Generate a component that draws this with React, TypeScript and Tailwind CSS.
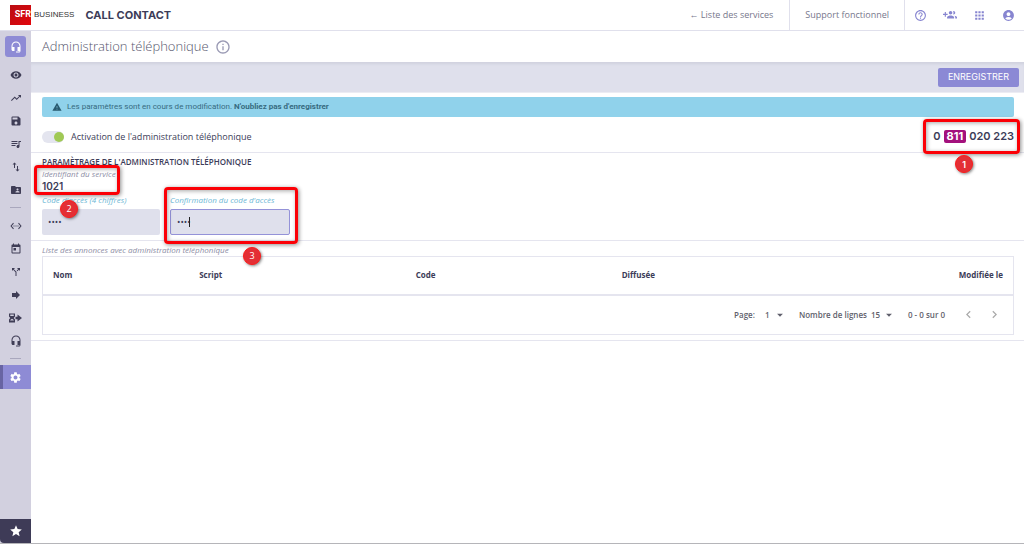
import { useState } from 'react'
import type { IconType } from 'react-icons'
import {
  MdAccountCircle,
  MdApps,
  MdArrowDropDown,
  MdCallSplit,
  MdChevronLeft,
  MdChevronRight,
  MdFolderShared,
  MdForward,
  MdHeadsetMic,
  MdHelpOutline,
  MdImportExport,
  MdInfoOutline,
  MdQueueMusic,
  MdSave,
  MdSettings,
  MdSettingsEthernet,
  MdStar,
  MdToday,
  MdTrendingUp,
  MdVisibility,
  MdWarning,
} from 'react-icons/md'

// hourglass followed by a solid arrow
function OverflowIcon() {
  return (
    <svg width="13" height="12" viewBox="0 0 26 24" fill="currentColor">
      <path
        d="M0 3h12v6l-2.500 3 2.500 3v6H0v-6l2.500-3L0 9zM2.500 5v3h7V5zM6 13.500L2.500 16v1h7v-1z"
        fillRule="evenodd"
      />
      <path d="M13 9.500h4V5l9 7-9 7v-4.500h-4z" />
    </svg>
  )
}

function GroupAddIcon() {
  return (
    <svg width="14" height="14" viewBox="0 0 24 24" fill="currentColor">
      <path d="M8 10H5V7H3v3H0v2h3v3h2v-3h3v-2zm10 1c1.660 0 2.990-1.340 2.990-3S19.660 5 18 5c-.320 0-.630.050-.910.140.570.810.900 1.790.900 2.860s-.340 2.040-.900 2.860c.280.090.590.140.910.140zm-5 0c1.660 0 2.990-1.340 2.990-3S14.660 5 13 5c-1.660 0-3 1.340-3 3s1.340 3 3 3zm6.620 2.160c.830.730 1.380 1.660 1.380 2.840v2h3v-2c0-1.540-2.370-2.490-4.380-2.840zM13 13c-2 0-6 1-6 3v2h12v-2c0-2-4-3-6-3z" />
    </svg>
  )
}

const topItems: { label: string; icon: IconType }[] = [
  { label: 'Supervision', icon: MdVisibility },
  { label: 'Statistiques', icon: MdTrendingUp },
  { label: 'Enregistrements', icon: MdSave },
  { label: 'Annonces', icon: MdQueueMusic },
  { label: 'Import et export', icon: MdImportExport },
  { label: 'Contacts', icon: MdFolderShared },
]

const bottomItems: { label: string; icon: IconType }[] = [
  { label: 'Scripts', icon: MdSettingsEthernet },
  { label: 'Calendriers', icon: MdToday },
  { label: 'Routage', icon: MdCallSplit },
  { label: 'Renvois', icon: MdForward },
  { label: 'Débordement', icon: OverflowIcon },
  { label: 'Agents', icon: MdHeadsetMic },
]

function NavItem({ label, icon: Icon }: { label: string; icon: IconType }) {
  return (
    <a href="#" aria-label={label} className="flex h-[23px] w-full items-center justify-center text-[#3f3d56]">
      <Icon size={12} />
    </a>
  )
}

function Divider() {
  return (
    <div className="flex h-[13px] items-center">
      <div className="h-px w-[11px] bg-[#a9a7bd]" />
    </div>
  )
}

function Sidebar() {
  return (
    <nav className="flex w-[31px] shrink-0 flex-col items-center bg-[#d2d0df] pt-[5px]">
      <a href="#" aria-label="Call Contact" className="mb-[6px] flex size-[21px] items-center justify-center rounded-[3px] bg-[#8e8bd5] text-white">
        <MdHeadsetMic size={12} />
      </a>
      {topItems.map((item) => (
        <NavItem key={item.label} {...item} />
      ))}
      <Divider />
      {bottomItems.map((item) => (
        <NavItem key={item.label} {...item} />
      ))}
      <Divider />
      <a
        href="#"
        aria-label="Paramètres"
        className="flex h-6 w-full items-center justify-center border-l-3 border-[#6864a3] bg-[#8e8bd5] pr-[3px] text-white"
      >
        <MdSettings size={13} />
      </a>
      <a href="#" aria-label="Favoris" className="mt-auto flex h-6 w-full items-center justify-center rounded-bl-sm bg-[#3e3b57] text-white">
        <MdStar size={14} />
      </a>
    </nav>
  )
}

function Frame({ className }: { className: string }) {
  return (
    <div
      className={`pointer-events-none absolute rounded-[4px] border-3 border-[#fb0006] shadow-[1px_1px_4px_rgba(0,0,0,0.45),inset_1px_1px_4px_rgba(0,0,0,0.35)] ${className}`}
    />
  )
}

function Marker({ n, className }: { n: number; className: string }) {
  return (
    <span
      className={`absolute flex size-[18px] items-center justify-center rounded-full border border-[#ff1a1a] bg-[#e32f35] text-[9px] text-white shadow-[1px_1px_3px_rgba(0,0,0,0.5)] ${className}`}
    >
      {n}
    </span>
  )
}

export default function App() {
  const [active, setActive] = useState(true)
  const [code, setCode] = useState('1021')
  const [confirmation, setConfirmation] = useState('1021')

  return (
    <div className="flex min-h-screen flex-col border-b border-[#b5b5b9] bg-white font-['Open_Sans',sans-serif] text-[#3c3c58]">
      <header className="flex h-[31px] items-center border-b border-[#e0e0ec] pl-[10px]">
        <div className="flex items-center text-[#333]">
          <span className="flex h-5 w-[21px] items-center justify-end bg-linear-to-br from-[#b90d12] to-[#e2050b] font-['Roboto',sans-serif] text-[9px] font-bold text-white">
            SFR
          </span>
          <span className="ml-[3px] font-['Liberation_Sans',sans-serif] text-[8px]">BUSINESS</span>
        </div>
        <h1 className="ml-[11px] font-['Inter',sans-serif] text-[11px] font-bold">CALL CONTACT</h1>
        <div className="ml-auto flex h-full items-center text-[9px] text-[#77778c]">
          <a href="#" className="flex h-full items-center border-r border-[#e0e0ec] px-4">← Liste des services</a>
          <a href="#" className="flex h-full items-center border-r border-[#e0e0ec] px-[15px]">Support fonctionnel</a>
          <div className="flex items-center gap-4 pr-[9px] pl-[9px] text-[#8785d0]">
            <button aria-label="Aide"><MdHelpOutline size={13} /></button>
            <button aria-label="Ajouter un groupe"><GroupAddIcon /></button>
            <button aria-label="Applications"><MdApps size={13} /></button>
            <button aria-label="Compte"><MdAccountCircle size={13} /></button>
          </div>
        </div>
      </header>

      <div className="flex flex-1">
        <Sidebar />
        <main className="min-w-0 flex-1">
          <div className="flex h-[31px] items-center gap-[6px] pl-[11px]">
            <h2 className="text-[13px] font-light text-[#55556c]">Administration téléphonique</h2>
            <MdInfoOutline size={16} className="text-[#9a9ab4]" />
          </div>
          <div className="flex h-[31px] items-center justify-end border-b border-[#ececf3] bg-[#dfe0ec] pr-[5px] shadow-[inset_0_3px_3px_-1px_#d0d1de]">
            <button className="h-[19px] rounded-[2px] bg-[#8b89d5] px-[10px] font-['Inter',sans-serif] text-[9px] text-white">ENREGISTRER</button>
          </div>

          <div className="mr-[10px] ml-[11px] mt-1 flex h-5 items-center gap-[5px] rounded-[2px] bg-[#90d2eb] pl-[10px] font-['Roboto',sans-serif] text-[8px] text-[#376b80]">
            <MdWarning size={10} className="text-[#295b70]" />
            <p>
              Les paramètres sont en cours de modification. <b>N'oubliez pas d'enregistrer</b>
            </p>
          </div>

          <section className="flex h-9 items-center justify-between border-b border-[#e5e5ef] pt-1 pr-[10px] pl-[11px]">
            <label className="flex items-center gap-[7px] text-[9px]">
              <input
                type="checkbox"
                checked={active}
                onChange={(e) => setActive(e.target.checked)}
                className="flex h-3 w-[22px] appearance-none items-center rounded-full bg-[#e4e5ef] before:size-[10px] before:rounded-full before:bg-[#bbb] checked:justify-end checked:before:bg-[#a0c955]"
              />
              Activation de l'administration téléphonique
            </label>
            <div className="relative flex items-center gap-[3px] font-['Inter',sans-serif] text-[11px] leading-[13px] font-semibold">
              <span>0</span>
              <span className="rounded-[2px] bg-[#a3107c] px-[3px] font-bold text-white">811</span>
              <span>020 223</span>
              <Frame className="-right-[6px] -left-[10px] -inset-y-[11px]" />
              <Marker n={1} className="top-[25px] left-[22px]" />
            </div>
          </section>

          <section className="h-[88px] border-b border-[#e5e5ef] pt-[3px] pl-[11px]">
            <h3 className="text-[8px] leading-3 font-semibold">PARAMÈTRAGE DE L'ADMINISTRATION TÉLÉPHONIQUE</h3>
            <div className="relative w-[70px]">
              <p className="text-[8px] leading-3 whitespace-nowrap text-[#8d8da5] italic">Identifiant du service</p>
              <p className="font-['Inter',sans-serif] text-[10px] leading-3 font-semibold">1021</p>
              <Frame className="-inset-x-2 -top-[3px] -bottom-[3px]" />
            </div>
            <div className="mt-[1px] flex gap-[10px]">
              <div className="relative w-[118px]">
                <label htmlFor="code" className="block text-[8px] leading-[14px] text-[#6cb7d5] italic">
                  Code d'accès (4 chiffres)
                </label>
                <input
                  id="code"
                  type="password"
                  value={code}
                  onChange={(e) => setCode(e.target.value)}
                  className="h-[26px] w-full rounded-[2px] bg-[#dfe0ec] px-[6px] text-[9px]"
                />
                <Marker n={2} className="top-[7px] left-[18px]" />
              </div>
              <div className="relative w-[120px]">
                <label htmlFor="confirmation" className="block text-[8px] leading-[14px] text-[#6cb7d5] italic">
                  Confirmation du code d'accès
                </label>
                <input
                  id="confirmation"
                  type="password"
                  value={confirmation}
                  onChange={(e) => setConfirmation(e.target.value)}
                  className="h-[26px] w-full rounded-[2px] border border-[#9492d8] bg-[#dfe0ec] px-[6px] text-[9px] outline-none"
                />
                <span className="absolute bottom-2 left-[19px] h-[10px] w-px bg-[#222]" />
                <Frame className="-right-2 -left-[6px] -top-[6px] -bottom-[9px]" />
                <Marker n={3} className="top-[54px] left-[73px]" />
              </div>
            </div>
          </section>

          <section className="border-b border-[#e5e5ef] pt-[3px] pr-[10px] pb-[5px] pl-[11px]">
            <table className="w-full table-fixed text-left text-[8px]">
              <caption className="text-left text-[8px] leading-3 text-[#8d8da5] italic">
                Liste des annonces avec administration téléphonique
              </caption>
              <thead>
                <tr className="h-[38px] border border-b-2 border-[#e5e5ef]">
                  <th className="w-[15%] pl-[10px] font-bold">Nom</th>
                  <th className="w-[22%] pl-[11px] font-bold">Script</th>
                  <th className="w-[21%] pl-[14px] font-bold">Code</th>
                  <th className="pl-[16px] font-bold">Diffusée</th>
                  <th className="w-[20%] pr-[10px] text-right font-bold">Modifiée le</th>
                </tr>
              </thead>
            </table>
            <div className="flex h-[39px] items-center justify-end border border-t-0 border-[#e5e5ef] pr-[11px] text-[8px] font-semibold text-[#5f5f6c]">
              <label htmlFor="page">Page:</label>
              <div className="ml-[10px] flex items-center">
                <select id="page" className="w-2 appearance-none">
                  <option>1</option>
                </select>
                <MdArrowDropDown size={14} />
              </div>
              <label htmlFor="lignes" className="ml-3">Nombre de lignes</label>
              <div className="ml-1 flex items-center">
                <select id="lignes" className="w-[11px] appearance-none">
                  <option>15</option>
                </select>
                <MdArrowDropDown size={14} />
              </div>
              <span className="ml-3">0 - 0 sur 0</span>
              <button aria-label="Page précédente" className="ml-4 text-[#aaa]"><MdChevronLeft size={15} /></button>
              <button aria-label="Page suivante" className="ml-[11px] text-[#aaa]"><MdChevronRight size={15} /></button>
            </div>
          </section>
        </main>
      </div>
    </div>
  )
}
